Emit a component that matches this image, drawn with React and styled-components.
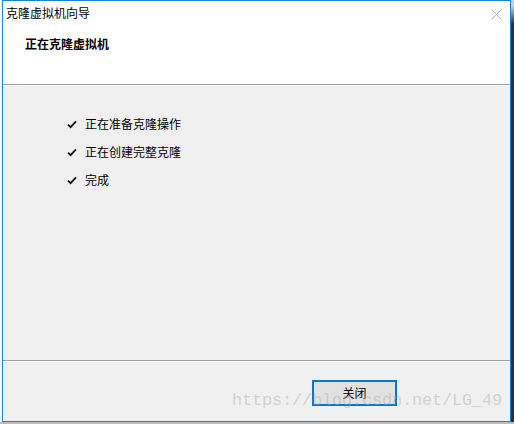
import styled, { createGlobalStyle } from "styled-components";

const GlobalStyle = createGlobalStyle`
  html, body { margin: 0; padding: 0; background: #f4f4f4; }
  body { font-family: "Noto Sans CJK SC", "Noto Sans", sans-serif; }
`;

const steps = ["正在准备克隆操作", "正在创建完整克隆", "完成"];

const CheckIcon = () => (
  <svg width="10" height="9" viewBox="0 0 10 9">
    <path d="M1 4.6 L3.6 7.2 L9 1.4" fill="none" stroke="#111" strokeWidth="1.8" />
  </svg>
);

const CloseIcon = () => (
  <svg width="11" height="11" viewBox="0 0 11 11">
    <path d="M0.5 0.5 L10.5 10.5 M10.5 0.5 L0.5 10.5" stroke="#b4b4b4" strokeWidth="1" fill="none" />
  </svg>
);

const App = () => {
  return (
    <Page>
      <GlobalStyle />
      <LeftStrip />
      <Window>
        <TopArea>
          <TitleBar>
            <span>克隆虚拟机向导</span>
            <CloseButton>
              <CloseIcon />
            </CloseButton>
          </TitleBar>
          <Header>正在克隆虚拟机</Header>
        </TopArea>
        <Content>
          <StepList>
            {steps.map((s) => (
              <Step key={s}>
                <CheckBox>
                  <CheckIcon />
                </CheckBox>
                {s}
              </Step>
            ))}
          </StepList>
        </Content>
        <Footer>
          <Button>关闭</Button>
        </Footer>
        <Watermark>https://blog.csdn.net/LG_49</Watermark>
      </Window>
      <RightStrip />
      <Shadow />
    </Page>
  );
};

export default App;

const Page = styled.div`
  width: 514px;
  height: 424px;
  display: grid;
  grid-template-columns: 2px 509px 3px;
  grid-template-rows: 422px 2px;
  background: #f4f4f4;
  overflow: hidden;
`;

const LeftStrip = styled.div`
  background: #f7f7f7;
`;

const RightStrip = styled.div`
  background: linear-gradient(#cfcfcf 0, #cfcfcf 6px, #2e2e2e 24px, #2e2e2e);
`;

const Shadow = styled.div`
  grid-column: 1 / 4;
  background: #bdbdbd;
`;

const Window = styled.div`
  position: relative;
  box-sizing: border-box;
  border: 1px solid #1883d7;
  display: flex;
  flex-direction: column;
  background: #f0f0f0;
  font-size: 12px;
  color: #000;
`;

const TopArea = styled.div`
  height: 83px;
  background: #fff;
  border-bottom: 1px solid #a0a0a0;
`;

const TitleBar = styled.div`
  height: 24px;
  display: flex;
  align-items: center;
  justify-content: space-between;
  padding-left: 3px;
  padding-right: 8px;
  line-height: 16px;
`;

const CloseButton = styled.div`
  display: flex;
  margin-top: 2px;
`;

const Header = styled.div`
  padding: 11px 0 0 22px;
  font-weight: bold;
  line-height: 16px;
`;

const Content = styled.div`
  flex: 1;
  border-top: 1px solid #fff;
  border-bottom: 1px solid #a0a0a0;
  padding: 24px 0 0 64px;
`;

const StepList = styled.div`
  display: flex;
  flex-direction: column;
`;

const Step = styled.div`
  height: 28px;
  display: flex;
  align-items: center;
  line-height: 16px;
`;

const CheckBox = styled.span`
  display: flex;
  width: 18px;
`;

const Footer = styled.div`
  height: 60px;
  border-top: 1px solid #fff;
  display: flex;
  justify-content: flex-end;
  align-items: flex-start;
  padding: 18px 113px 0 0;
  box-sizing: border-box;
`;

const Button = styled.div`
  width: 85px;
  height: 26px;
  box-sizing: border-box;
  border: 2px solid #0078d7;
  background: #e1e1e1;
  display: flex;
  align-items: center;
  justify-content: center;
  line-height: 16px;
`;

const Watermark = styled.div`
  position: absolute;
  left: 229px;
  top: 390px;
  font-family: "Liberation Mono", monospace;
  font-size: 17px;
  letter-spacing: -0.2px;
  color: rgba(170, 170, 170, 0.45);
  pointer-events: none;
  white-space: nowrap;
`;
